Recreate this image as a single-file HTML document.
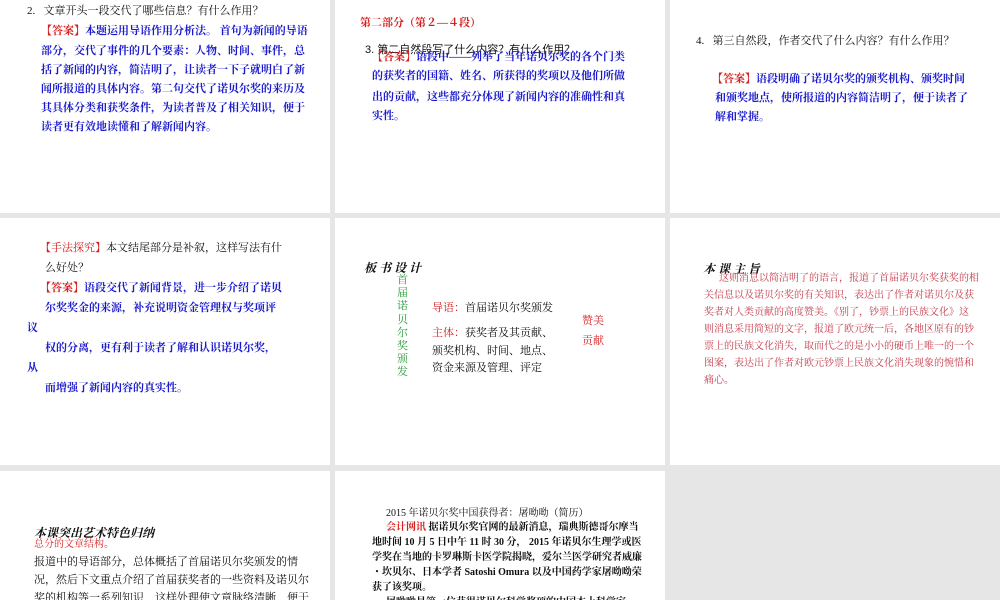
<!DOCTYPE html>
<html><head><meta charset="utf-8"><style>
body{margin:0;width:1000px;height:600px;background:#e6e6e6;position:relative;overflow:hidden;font-family:"Liberation Serif","Noto Serif CJK SC","Noto Sans CJK SC",serif;}
.t{position:absolute;background:#fff;overflow:hidden}
.l{position:absolute;white-space:nowrap;font-size:11px;line-height:14px}
.b{color:#1a1acc;font-weight:bold}
.r{color:#d42020}
.k{color:#111}
.cal{font-family:"Noto Serif CJK SC",serif;font-weight:bold;font-style:italic;font-size:12px;color:#111}
</style></head><body>
<div class="t" style="left:0;top:0;width:330px;height:213px">
<div class="l k" style="left:27px;top:4px">2.&nbsp;&nbsp; 文章开头一段交代了哪些信息？有什么作用？</div>
<div class="l b" style="left:41px;top:24px"><span class="r">【答案】</span>本题运用导语作用分析法。 首句为新闻的导语</div>
<div class="l b" style="left:41px;top:44px">部分，交代了事件的几个要素：人物、时间、事件，总</div>
<div class="l b" style="left:41px;top:63px">括了新闻的内容，简洁明了，让读者一下子就明白了新</div>
<div class="l b" style="left:41px;top:82px">闻所报道的具体内容。第二句交代了诺贝尔奖的来历及</div>
<div class="l b" style="left:41px;top:101px">其具体分类和获奖条件，为读者普及了相关知识，便于</div>
<div class="l b" style="left:41px;top:120px">读者更有效地读懂和了解新闻内容。</div>
</div>
<div class="t" style="left:335px;top:0;width:330px;height:213px">
<div class="l r" style="left:25px;top:16px;font-weight:bold">第二部分（第２—４段）</div>
<div class="l k" style="left:30px;top:43px;font-family:'Liberation Sans','Noto Sans CJK SC',sans-serif">3. 第二自然段写了什么内容？有什么作用？</div>
<div class="l b" style="left:37px;top:50px"><span class="r">【答案】</span>语段中——列举了当年诺贝尔奖的各个门类</div>
<div class="l b" style="left:37px;top:69px">的获奖者的国籍、姓名、所获得的奖项以及他们所做</div>
<div class="l b" style="left:37px;top:90px">出的贡献，这些都充分体现了新闻内容的准确性和真</div>
<div class="l b" style="left:37px;top:109px">实性。</div>
</div>
<div class="t" style="left:670px;top:0;width:330px;height:213px">
<div class="l k" style="left:26px;top:34px">4.&nbsp;&nbsp; 第三自然段，作者交代了什么内容？有什么作用？</div>
<div class="l b" style="left:42px;top:72px"><span class="r">【答案】</span>语段明确了诺贝尔奖的颁奖机构、颁奖时间</div>
<div class="l b" style="left:45px;top:91px">和颁奖地点，使所报道的内容简洁明了，便于读者了</div>
<div class="l b" style="left:45px;top:110px">解和掌握。</div>
</div>
<div class="t" style="left:0;top:218px;width:330px;height:247px">
<div class="l k" style="left:40px;top:23px"><span class="r">【手法探究】</span>本文结尾部分是补叙，这样写法有什</div>
<div class="l k" style="left:45px;top:43px">么好处？</div>
<div class="l b" style="left:40px;top:63px"><span class="r">【答案】</span>语段交代了新闻背景，进一步介绍了诺贝</div>
<div class="l b" style="left:45px;top:83px">尔奖奖金的来源，补充说明资金管理权与奖项评</div>
<div class="l b" style="left:27px;top:103px">议</div>
<div class="l b" style="left:45px;top:123px">权的分离，更有利于读者了解和认识诺贝尔奖，</div>
<div class="l b" style="left:27px;top:143px">从</div>
<div class="l b" style="left:45px;top:163px">而增强了新闻内容的真实性。</div>
</div>
<div class="t" style="left:335px;top:218px;width:330px;height:247px">
<div class="l cal" style="left:29px;top:43px">板 书 设 计</div>
<div class="l" style="left:62px;top:56px;color:#2a9a3a;line-height:13.2px;font-size:11px;white-space:normal;width:12px">首届诺贝尔奖颁发</div>
<div class="l k" style="left:97px;top:83px"><span class="r">导语：</span>首届诺贝尔奖颁发</div>
<div class="l k" style="left:97px;top:108px"><span class="r">主体：</span>获奖者及其贡献、</div>
<div class="l k" style="left:97px;top:126px">颁奖机构、时间、地点、</div>
<div class="l k" style="left:97px;top:143px">资金来源及管理、评定</div>
<div class="l r" style="left:247px;top:96px">赞美</div>
<div class="l r" style="left:247px;top:116px">贡献</div>
</div>
<div class="t" style="left:670px;top:218px;width:330px;height:247px">
<div class="l cal" style="left:33px;top:44px">本 课 主 旨</div>
<div class="l" style="left:49px;top:54px;color:#c03a4a;font-size:10px">这则消息以简洁明了的语言，报道了首届诺贝尔奖获奖的相</div>
<div class="l" style="left:34px;top:71px;color:#c03a4a;font-size:10px">关信息以及诺贝尔奖的有关知识，表达出了作者对诺贝尔及获</div>
<div class="l" style="left:34px;top:88px;color:#c03a4a;font-size:10px">奖者对人类贡献的高度赞美。《别了，钞票上的民族文化》这</div>
<div class="l" style="left:34px;top:105px;color:#c03a4a;font-size:10px">则消息采用简短的文字，报道了欧元统一后，各地区原有的钞</div>
<div class="l" style="left:34px;top:122px;color:#c03a4a;font-size:10px">票上的民族文化消失，取而代之的是小小的硬币上唯一的一个</div>
<div class="l" style="left:34px;top:139px;color:#c03a4a;font-size:10px">图案，表达出了作者对欧元钞票上民族文化消失现象的惋惜和</div>
<div class="l" style="left:34px;top:156px;color:#c03a4a;font-size:10px">痛心。</div>
</div>
<div class="t" style="left:0;top:471px;width:330px;height:129px">
<div class="l cal" style="left:34px;top:55px">本课突出艺术特色归纳</div>
<div class="l r" style="left:34px;top:67px;font-size:10px">总分的文章结构。</div>
<div class="l k" style="left:34px;top:84px">报道中的导语部分，总体概括了首届诺贝尔奖颁发的情</div>
<div class="l k" style="left:34px;top:102px">况，然后下文重点介绍了首届获奖者的一些资料及诺贝尔</div>
<div class="l k" style="left:34px;top:120px">奖的机构等一系列知识，这样处理使文章脉络清晰，便于</div>
</div>
<div class="t" style="left:335px;top:471px;width:330px;height:129px">
<div class="l k" style="left:51px;top:36px;font-size:10px">2015 年诺贝尔奖中国获得者：屠呦呦（简历）</div>
<div class="l k" style="left:51px;top:50px;font-size:10px;font-weight:bold"><span class="r">会计网讯</span> 据诺贝尔奖官网的最新消息，瑞典斯德哥尔摩当</div>
<div class="l k" style="left:37px;top:65px;font-size:10px;font-weight:bold">地时间 10 月 5 日中午 11 时 30 分， 2015 年诺贝尔生理学或医</div>
<div class="l k" style="left:37px;top:80px;font-size:10px;font-weight:bold">学奖在当地的卡罗琳斯卡医学院揭晓，爱尔兰医学研究者威廉</div>
<div class="l k" style="left:37px;top:95px;font-size:10px;font-weight:bold">・坎贝尔、日本学者 Satoshi Omura 以及中国药学家屠呦呦荣</div>
<div class="l k" style="left:37px;top:110px;font-size:10px;font-weight:bold">获了该奖项。</div>
<div class="l k" style="left:51px;top:125px;font-size:10px;font-weight:bold">屠呦呦是第一位获得诺贝尔科学奖项的中国本土科学家</div>
</div>
</body></html>
